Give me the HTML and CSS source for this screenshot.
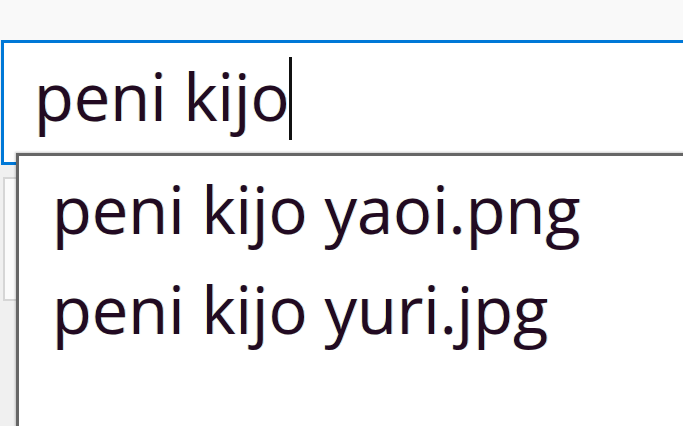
FILE: index.html
```html
<!DOCTYPE html>
<html lang="en">
<head>
    <meta charset="UTF-8">
    <meta name="viewport" content="width=device-width, initial-scale=1.0">
    <title>Search</title>
    <link rel="stylesheet" href="styles.css">
</head>
<body>

    <div class="screen">
        <div class="top-strip"></div>

        <!-- Search box with focus border -->
        <div class="search-box">
            <span class="search-text">peni kijo</span><span class="caret"></span>
        </div>

        <!-- Control partly hidden under the suggestions -->
        <div class="below">
            <div class="hidden-field"></div>
        </div>

        <!-- Autocomplete suggestions -->
        <ul class="suggestions">
            <li class="suggestion">peni kijo yaoi.png</li>
            <li class="suggestion">peni kijo yuri.jpg</li>
        </ul>
    </div>

</body>
</html>
```

FILE: styles.css
```css
body {
    margin: 0;
    padding: 0;
    background-color: #f0f0f0;
    font-family: 'Open Sans', 'Noto Sans', sans-serif;
    overflow: hidden;
}

.screen {
    position: relative;
    width: 683px;
    height: 426px;
    overflow: hidden;
}

.top-strip {
    height: 40px;
    background-color: #f9f9f9;
}

.search-box {
    display: flex;
    align-items: flex-start;
    width: 760px;
    height: 125px;
    margin-left: 1px;
    padding-left: 30px;
    box-sizing: border-box;
    background-color: #fff;
    border: 3px solid #0078d7;
    border-right: none;
}

.search-text,
.suggestion {
    font-size: 65px;
    color: #220a22;
    /* cleartype-ish colour fringes */
    text-shadow: -1px 0 rgba(255, 190, 0, 0.35), 1px 0 rgba(0, 160, 255, 0.35);
    white-space: nowrap;
}

.search-text {
    margin-top: 9px;
}

.caret {
    width: 3px;
    height: 83px;
    margin-left: -1px;
    margin-top: 14px;
    background-color: #111;
}

.below {
    padding-top: 12px;
}

.hidden-field {
    width: 40px;
    height: 120px;
    margin-left: 3px;
    background-color: #fbfbfb;
    border: 2px solid #d6d6d6;
}

.suggestions {
    position: absolute;
    left: 16px;
    top: 153px;
    width: 720px;
    height: 320px;
    margin: 0;
    padding: 3px 0 0 33px;
    list-style: none;
    background-color: #fff;
    border: 3px solid #666;
    box-shadow: 0 0 2px 1px rgba(0, 0, 0, 0.2);
}

.suggestion {
    height: 100px;
    line-height: 100px;
}
```
